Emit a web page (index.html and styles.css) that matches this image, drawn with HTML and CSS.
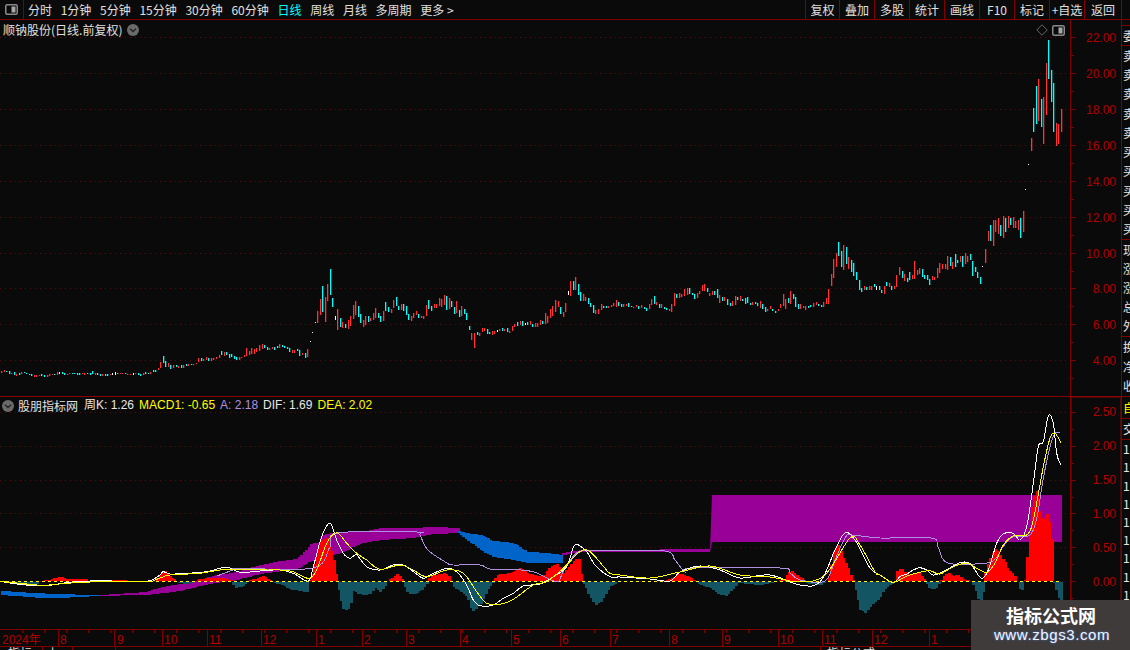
FILE: index.html
```html
<!DOCTYPE html>
<html lang="zh-CN">
<head>
<meta charset="utf-8">
<title>顺钠股份</title>
<link rel="stylesheet" href="styles.css">
</head>
<body>
<div class="app">
  <header class="toolbar">
    <button class="tb-toggle" type="button" aria-label="切换">
      <svg class="panel-icon" viewBox="0 0 13 11"><rect x="0.75" y="0.75" width="11.5" height="9.5" rx="1.5" class="panel-frame"/><rect x="6.5" y="2.5" width="4" height="6" class="panel-fill"/></svg>
    </button>
    <nav class="periods">
      <span>分时</span><span>1分钟</span><span>5分钟</span><span>15分钟</span><span>30分钟</span><span>60分钟</span>
      <span class="active">日线</span><span>周线</span><span>月线</span><span>多周期</span><span>更多 &gt;</span>
    </nav>
    <div class="actions">
      <span class="act act-first">复权</span><span class="act">叠加</span><span class="act">多股</span><span class="act">统计</span><span class="act">画线</span><span class="act">F10</span><span class="act">标记</span><span class="act">+自选</span><span class="act act-last">返回</span>
    </div>
  </header>

  <div class="body">
    <div class="chart-col">
      <section class="pane pane-main">
        <div class="pane-title">
          <span>顺钠股份(日线.前复权)</span>
          <svg class="round-icon" viewBox="0 0 12 12"><circle cx="6" cy="6" r="6" class="round-bg"/><path d="M3 4.8 6 7.6 9 4.8" class="round-chev"/></svg>
        </div>
        <div class="pane-tools">
          <svg class="diamond" viewBox="0 0 12 12"><path d="M6 .8 11.2 6 6 11.2 .8 6Z"/></svg>
          <svg class="panel-icon" viewBox="0 0 13 11"><rect x="0.75" y="0.75" width="11.5" height="9.5" rx="1.5" class="panel-frame"/><rect x="6.5" y="2.5" width="4" height="6" class="panel-fill"/></svg>
        </div>
        <svg id="mainChart" class="canvas" viewBox="0 20 1121 376">
          <g class="ax-labels">
            <text x="1116" y="42">22.00</text><text x="1116" y="78">20.00</text><text x="1116" y="114">18.00</text><text x="1116" y="150">16.00</text><text x="1116" y="186">14.00</text><text x="1116" y="222">12.00</text><text x="1116" y="258">10.00</text><text x="1116" y="293">8.00</text><text x="1116" y="329">6.00</text><text x="1116" y="365">4.00</text>
          </g>
        </svg>
      </section>

      <section class="pane pane-sub">
        <div class="pane-title pane-title-sub">
          <svg class="round-icon" viewBox="0 0 12 12"><circle cx="6" cy="6" r="6" class="round-bg"/><path d="M3 4.8 6 7.6 9 4.8" class="round-chev"/></svg>
          <span class="sub-name">股朋指标网</span>
          <span class="v-white">周K: 1.26</span>
          <span class="v-yellow">MACD1: -0.65</span>
          <span class="v-lav">A: 2.18</span>
          <span class="v-white">DIF: 1.69</span>
          <span class="v-yellow">DEA: 2.02</span>
        </div>
        <svg id="subChart" class="canvas" viewBox="0 397 1121 233">
          <g class="ax-labels">
            <text x="1116" y="416">2.50</text><text x="1116" y="450">2.00</text><text x="1116" y="484">1.50</text><text x="1116" y="518">1.00</text><text x="1116" y="552">0.50</text><text x="1116" y="586">0.00</text>
          </g>
        </svg>
      </section>

      <div class="date-row">
        <svg id="dateAxis" class="canvas" viewBox="0 630 1121 17">
          <g class="date-labels">
            <text x="2" y="644">2024年</text><text x="60" y="644">8</text><text x="117" y="644">9</text><text x="164" y="644">10</text><text x="209" y="644">11</text><text x="263" y="644">12</text><text x="318" y="644">1</text><text x="364" y="644">2</text><text x="408" y="644">3</text><text x="462" y="644">4</text><text x="513" y="644">5</text><text x="562" y="644">6</text><text x="612" y="644">7</text><text x="671" y="644">8</text><text x="724" y="644">9</text><text x="780" y="644">10</text><text x="824" y="644">11</text><text x="874" y="644">12</text><text x="931" y="644">1</text>
          </g>
        </svg>
      </div>

      <div class="bottom-row">
        <span class="bt bt-a">指标</span><span class="bt bt-b">上</span><span class="bt bt-c"></span><span class="bt bt-d"></span><span class="bt bt-e">指标公式</span>
      </div>
    </div>

    <aside class="side">
      <div class="side-gap"></div>
      <div class="side-group side-g0"><span>委</span></div>
      <div class="side-group side-g1"><span>卖</span><span>卖</span><span>卖</span><span>卖</span><span>卖</span><span>买</span><span>买</span><span>买</span><span>买</span><span>买</span></div>
      <div class="side-group side-g2"><span>现</span><span>涨</span><span>涨</span><span>总</span><span>外</span></div>
      <div class="side-group side-g3"><span>换</span><span>净</span><span>收</span></div>
      <div class="side-group side-g4"><span class="side-yellow">自</span></div>
      <div class="side-group side-g5"><span>交</span></div>
      <div class="side-group side-g6"><span>1.82</span><span>1.76</span><span>1.64</span><span>1.52</span><span>1.40</span><span>1.36</span><span>1.28</span><span>1.21</span><span>1.15</span></div>
    </aside>
  </div>

  <div class="watermark">
    <div class="wm-title">指标公式网</div>
    <div class="wm-url">www.zbgs3.com</div>
  </div>
</div>
<script src="chart.js"></script>
</body>
</html>
```
FILE: styles.css
```css
* { box-sizing: border-box; }
html, body { margin: 0; padding: 0; background: #0a0a0a; }
body { font: 12px "Liberation Sans", "Noto Sans CJK SC", sans-serif; color: #e0e0e0; }
.app { position: relative; width: 1130px; height: 650px; overflow: hidden; background: #0a0a0a; display: flex; flex-direction: column; }

.toolbar { height: 20px; flex: none; display: flex; align-items: stretch; border-bottom: 1px solid #800000; font-family: "Noto Sans CJK SC", sans-serif; }
.tb-toggle { width: 24px; padding: 0 0 0 5px; background: none; border: 0; border-right: 1px solid #800000; display: flex; align-items: center; }
.panel-icon { width: 13px; height: 11px; display: block; }
.panel-frame { fill: none; stroke: #8a8a8a; stroke-width: 1.5; }
.panel-fill { fill: #a8a8a8; }
.periods { display: flex; align-items: center; gap: 8.7px; padding-left: 4px; line-height: 19px; white-space: nowrap; }
.periods .active { color: #00ffff; }
.actions { margin-left: auto; display: flex; padding-right: 8px; }
.act { width: 35px; text-align: center; line-height: 19px; border-right: 1px solid #800000; }
.act-first { width: 35px; border-left: 1px solid #800000; }
.act-last { width: 37px; }

.body { flex: 1; min-height: 0; display: flex; }
.chart-col { width: 1121px; flex: none; display: flex; flex-direction: column; }
.pane { position: relative; flex: none; }
.pane-main { height: 377px; border-bottom: 1px solid #8a0000; }
.pane-sub { height: 233px; }
.canvas { display: block; width: 100%; height: 100%; }
.pane-title { position: absolute; left: 3px; top: 1px; display: flex; align-items: center; gap: 5px; line-height: 17px; font-family: "Noto Sans CJK SC", sans-serif; z-index: 1; }
.pane-title-sub { left: 2px; top: 0; gap: 5px; font-family: "Liberation Sans", "Noto Sans CJK SC", sans-serif; }
.sub-name { margin: 0 1px 0 -1px; font-family: "Noto Sans CJK SC", sans-serif; }
.round-icon { width: 12px; height: 12px; display: block; }
.round-bg { fill: #6a6a6a; }
.round-chev { fill: none; stroke: #222; stroke-width: 1.4; }
.pane-tools { position: absolute; left: 1036px; top: 4px; display: flex; align-items: center; gap: 4px; z-index: 1; }
.diamond { width: 12px; height: 12px; display: block; }
.diamond path { fill: none; stroke: #666; stroke-width: 1; }
.v-white { color: #e8e8e8; }
.v-yellow { color: #ffff00; }
.v-lav { color: #b090e0; }

.ax-labels text { font: 12px "Liberation Sans", sans-serif; fill: #b00000; text-anchor: end; }
.date-labels text { font: 12px "Liberation Sans", "Noto Sans CJK SC", sans-serif; fill: #b00000; }
.date-row { height: 17px; flex: none; }
.bottom-row { height: 3px; flex: none; display: flex; overflow: hidden; line-height: 12px; font-family: "Noto Sans CJK SC", sans-serif; }
.bt { border-right: 1px solid #800000; padding-left: 8px; white-space: nowrap; color: #ddd; }
.bt-a { width: 43px; }
.bt-b { width: 30px; padding-left: 4px; }
.bt-c { width: 43px; }
.bt-d { width: 705px; }
.bt-e { width: 100px; padding-left: 6px; border-right: 0; }

.side { flex: 1; min-width: 0; border-left: 1px solid #800000; display: flex; flex-direction: column; overflow: hidden; font-family: "Noto Sans CJK SC", sans-serif; line-height: 1; }
.side-gap { height: 5px; flex: none; }
.side-group { display: flex; flex-direction: column; flex: none; border-top: 1px solid #800000; white-space: nowrap; }
.side-group span { flex: 1; display: flex; align-items: center; padding-left: 1px; color: #e6e6e6; }
.side-g0 { height: 20px; }
.side-g1 { height: 194px; }
.side-g2 { height: 97px; }
.side-g3 { height: 60px; }
.side-g4 { height: 22px; }
.side-g5 { height: 21px; }
.side-g6 { height: 165px; }
.side .side-yellow { color: #ffff00; }

.watermark { position: absolute; left: 971px; top: 600px; width: 159px; height: 50px; background: #3f3b3b; text-align: center; z-index: 2; }
.wm-title { font: bold 18px/22px "Noto Sans CJK SC", sans-serif; color: #fff; margin-top: 4px; padding-left: 1px; }
.wm-url { font: 15px/18px "Liberation Sans", sans-serif; color: #eef4ff; letter-spacing: .6px; padding-left: 3px; text-shadow: 0 0 2px #4a80e0; }
```
FILE: chart.js
```js
var NS = "http://www.w3.org/2000/svg";
var RED = "#ff3333", CYAN = "#00ffff", DARK = "#800000", GRID = "#5a0a0a", PURPLE = "#980098";

function el(parent, name, attrs) {
  var n = document.createElementNS(NS, name);
  for (var k in attrs) n.setAttribute(k, attrs[k]);
  parent.appendChild(n);
  return n;
}
function layer(svg) {
  var g = document.createElementNS(NS, "g");
  svg.insertBefore(g, svg.firstChild);
  return g;
}
function conv(ox, oy, pts) {
  return pts.map(function (p) { return [ox + p[0] / 3, oy + p[1] / 3]; });
}
function interp(pts, x) {
  if (x < pts[0][0]) return pts[0].slice(1);
  for (var i = 1; i < pts.length; i++) {
    if (x <= pts[i][0]) {
      var a = pts[i - 1], b = pts[i], t = (x - a[0]) / ((b[0] - a[0]) || 1);
      return a.slice(1).map(function (v, j) { return v + (b[j + 1] - v) * t; });
    }
  }
  return pts[pts.length - 1].slice(1);
}
function smooth(pts) {
  var d = "M" + pts[0][0].toFixed(1) + " " + pts[0][1].toFixed(1);
  for (var i = 0; i < pts.length - 1; i++) {
    var p0 = pts[i - 1] || pts[i], p1 = pts[i], p2 = pts[i + 1], p3 = pts[i + 2] || p2;
    var c1x = p1[0] + (p2[0] - p0[0]) / 6, c1y = p1[1] + (p2[1] - p0[1]) / 6;
    var c2x = p2[0] - (p3[0] - p1[0]) / 6, c2y = p2[1] - (p3[1] - p1[1]) / 6;
    d += "C" + [c1x, c1y, c2x, c2y, p2[0], p2[1]].map(function (v) { return v.toFixed(1); }).join(" ");
  }
  return d;
}

var candleSets = [
 [0, 330, "4,123,129,r 13,121,126,r 19,123,125,c 28,123,132,c 34,129,132,r 43,126,135,c 49,132,138,r 58,129,135,c 64,126,132,r 73,126,129,c 79,129,132,c 88,132,135,c 94,132,138,c 103,135,141,r 109,135,141,r 118,135,138,r 124,132,138,c 133,135,141,c 142,135,141,r 148,132,138,r 157,132,135,r 163,132,135,c 172,126,135,r 178,126,132,w 187,126,132,c 193,129,135,c 202,132,135,r 208,129,132,r 217,129,132,c 223,129,132,c 232,129,135,c 238,129,135,c 247,129,132,r 253,129,135,r 262,129,132,c 271,129,135,c 277,123,132,c 286,129,135,r 292,129,135,c 301,132,138,c 307,132,138,r 316,132,138,c 322,132,138,c 331,132,135,r 337,129,135,w 346,126,135,w 352,129,132,c 361,129,132,r 367,129,132,r 376,129,132,c 382,132,135,r 391,132,135,r 400,129,135,w 406,129,132,r 415,129,135,c 421,132,138,c 430,129,135,r 436,126,132,c 445,129,132,c 451,126,132,r 460,120,126,c 466,120,126,c 475,114,120,r 481,96,114,r 490,78,99,c 496,93,111,c 505,99,111,r 511,105,117,c 520,105,114,r 529,105,111,c 535,108,114,r 544,105,114,c 550,105,114,r 559,102,108,c 565,102,108,r 574,102,105,c 580,102,105,r 589,99,102,r 595,84,96,r 604,84,93,c 610,87,93,r 619,81,90,r 625,84,93,c 634,84,93,r 640,84,90,r 649,81,87,r 658,75,84,r 664,63,75,c 673,66,78,r 679,66,75,c 688,72,84,c 694,72,81,c 703,78,87,c 709,81,90,c 718,81,90,r 724,81,84,r 733,75,81,r 739,54,78,r 748,63,75,r 754,54,72,r 763,57,72,r 769,54,66,r 778,45,63,r 787,42,57,r 793,45,54,c 802,51,60,c 808,54,60,r 817,51,57,r 823,51,60,c 832,48,54,c 838,42,54,r 847,45,51,c 853,48,54,c 862,51,57,c 868,54,66,c"],
 [290, 260, "7,270,280,r 13,270,280,r 22,266,272,c 28,270,288,c 37,280,285,r 45,279,294,c 52,267,290,r 61,243,245,w 67,216,218,w 75,186,189,w 82,153,190,r 91,117,165,r 97,78,156,c 106,110,186,r 112,72,122,r 121,27,105,c 127,114,141,c 136,168,180,w 142,147,210,r 151,174,202,c 157,186,204,r 166,192,204,c 175,180,207,r 181,168,198,r 190,135,177,r 196,123,165,r 205,138,171,c 211,162,189,c 220,180,201,r 226,168,195,r 235,168,186,c 241,174,183,r 250,159,180,r 256,144,174,r 265,159,174,c 271,168,186,c 280,153,183,r 286,126,153,c 295,141,156,c 304,147,159,r 310,120,144,r 319,111,138,c 325,138,150,c 334,132,150,r 340,132,153,c 349,138,165,c 355,162,180,c 364,168,183,r 370,159,174,r 379,153,165,r 385,162,174,c 394,168,174,r 400,168,177,r 409,135,168,r 415,120,147,c 424,138,153,c 433,132,144,r 439,132,144,r 448,114,138,r 454,117,141,r 463,105,135,r 469,108,150,c 478,114,147,r 484,123,141,c 493,141,162,c 499,123,159,r 508,150,171,c 514,138,168,r 523,147,162,c 529,159,180,c 538,198,210,c 544,219,240,r 553,219,264,r 562,216,225,c 568,219,228,r 577,204,216,r 583,204,214,r 592,207,222,c 598,216,222,c 607,213,225,r 613,213,222,r 622,210,216,w 628,207,213,r 637,204,213,c 643,207,213,r 652,204,216,c 658,213,219,r 667,198,213,r 673,192,201,r 682,186,198,c 691,183,195,r 697,183,198,c 706,189,195,w 712,186,195,c 721,183,195,r 727,192,201,c 736,189,201,r 742,189,201,r 751,180,195,r 757,183,192,c 766,159,192,r 772,168,189,r 781,147,174,r 787,138,168,r 796,120,156,r 805,123,141,r 811,141,162,c 820,156,171,r 826,129,156,r 835,93,105,w 841,63,108,r 850,63,90,c 856,51,90,r 865,72,105,c"],
 [580, 270, "1,66,93,c 10,72,93,r 16,81,93,r 25,84,102,c 31,99,111,c 40,105,129,c 46,120,132,r 55,117,132,r 64,102,120,r 70,108,114,c 79,108,114,c 85,108,114,r 94,105,111,r 100,99,108,r 109,90,111,r 115,96,108,c 124,102,111,c 130,102,111,r 139,102,108,r 145,99,111,c 154,108,111,c 160,111,114,r 169,105,111,r 175,108,117,c 184,105,114,r 193,111,117,c 199,114,123,c 208,102,117,r 214,87,105,r 223,78,102,c 229,96,105,r 238,102,114,c 244,102,114,r 253,111,117,c 259,114,120,c 268,117,123,r 274,102,126,r 283,69,108,r 289,72,84,c 298,69,84,r 304,72,81,r 313,57,78,r 322,54,75,r 328,54,72,c 337,69,75,c 343,72,87,c 352,69,84,r 358,63,72,r 367,45,63,r 373,42,63,r 382,54,66,c 388,69,78,r 397,63,75,r 403,63,75,c 412,57,84,c 418,75,99,r 427,81,93,c 433,81,93,r 442,87,105,c 451,99,108,c 457,93,108,r 466,78,105,r 472,81,90,c 481,78,93,r 487,87,93,c 496,84,102,c 502,81,99,c 511,99,105,c 517,96,105,r 526,96,102,c 532,99,108,c 541,93,114,r 547,102,117,c 556,111,126,c 562,117,123,r 571,108,117,r 577,117,123,c 586,123,129,c 595,117,123,r 601,102,114,r 610,72,108,r 616,87,117,r 625,84,99,c 631,63,102,r 640,72,87,c 646,81,111,c 655,102,117,c 661,102,117,r 670,108,114,r 676,108,120,r 685,108,114,c 691,105,111,c 700,99,111,r 709,96,105,r 715,102,108,c 724,105,111,c 730,96,111,r 739,84,102,r 745,57,102,r"],
 [820, 230, "34,132,168,r 40,87,144,r 49,69,111,r 55,36,78,c 64,63,111,c 70,45,120,r 79,51,102,c 85,81,117,r 94,90,126,c 100,99,138,c 109,126,150,c 118,150,180,c 124,174,186,c 133,168,180,r 139,171,180,c 148,168,180,r 154,168,180,r 163,162,171,c 169,168,180,w 178,168,180,c 184,180,189,c 193,168,192,r 199,156,168,c 208,159,171,r 214,168,180,c 223,168,177,r 229,135,171,r 238,111,135,r 247,123,144,c 253,132,153,r 262,144,156,c 268,126,150,c 277,135,147,r 283,93,147,r 292,120,135,r 298,114,132,r 307,117,141,c 313,135,147,c 322,135,150,c 328,147,165,c 337,138,150,r 343,141,150,r 352,114,144,r 358,99,129,r 367,102,117,r 376,102,117,r 382,78,120,r 391,81,108,c 397,96,117,r 406,72,111,c 412,90,99,c 421,78,96,r 427,78,111,c 436,69,102,r 442,78,96,r 451,72,90,c 457,93,138,c 466,111,126,c 472,126,144,c 481,141,162,c 487,108,110,w 496,57,99,r"],
 [960, 20, "85,633,663,r 91,615,663,c 100,600,678,r 106,600,636,r 115,594,642,r 121,615,648,c 130,588,654,r 136,594,636,c 145,588,624,r 151,594,615,c 160,591,624,r 166,603,624,r 175,600,630,r 181,594,654,c 190,573,636,r 196,507,510,w 205,432,435,w 214,354,393,r 220,264,336,c 229,198,312,c 235,177,303,r 244,237,321,c 250,231,372,r 259,129,285,r 265,60,177,c 274,150,246,c 280,189,336,c 289,309,378,r 295,312,372,r 304,267,336,r"]
];

/* ---------- axes ---------- */
function drawAxis(g, top, bottom, majors, minorGap, gridRight) {
  el(g, "line", { x1: 1070.5, x2: 1070.5, y1: top, y2: bottom, stroke: DARK });
  majors.forEach(function (y) {
    el(g, "line", { x1: 0, x2: gridRight, y1: y + .5, y2: y + .5, stroke: GRID, "stroke-dasharray": "1 4" });
    el(g, "line", { x1: 1071, x2: 1076, y1: y + .5, y2: y + .5, stroke: DARK });
    el(g, "line", { x1: 1071, x2: 1074, y1: y + minorGap + .5, y2: y + minorGap + .5, stroke: DARK });
  });
}

var mainSvg = document.getElementById("mainChart");
var mainG = layer(mainSvg);
drawAxis(mainG, 20, 396, [37, 73, 109, 145, 181, 217, 253, 288, 324, 360], 18, 1066);
candleSets.forEach(function (set) {
  set[2].split(" ").forEach(function (c) {
    var p = c.split(","), x = Math.round(set[0] + p[0] / 3), y1 = set[1] + p[1] / 3, y2 = set[1] + p[2] / 3;
    el(mainG, "rect", {
      x: x, y: Math.round(y1), width: p[3] === "w" ? 1 : 1.3,
      height: Math.max(1, Math.round(y2 - y1)),
      fill: p[3] === "r" ? RED : p[3] === "c" ? CYAN : "#ffffff"
    });
  });
});

/* ---------- indicator pane ---------- */
var subSvg = document.getElementById("subChart");
var subG = layer(subSvg);
el(subG, "rect", { x: 1071, y: 397, width: 50, height: 233, fill: "none", stroke: "#8a0a0a" });
drawAxis(subG, 397, 630, [412, 446, 480, 513, 547, 581], 17, 1066);
el(subG, "line", { x1: 0, x2: 1121, y1: 629.5, y2: 629.5, stroke: DARK });

var STEP = 2.45;
function band(pts, color) {
  var start = pts[0][0], end = pts[pts.length - 1][0];
  for (var x = start; x < end; x += STEP) {
    var v = interp(pts, x), t = Math.round(v[0]), b = Math.round(v[1]);
    el(subG, "rect", { x: Math.floor(x), y: t, width: 3, height: Math.max(1, b - t), fill: color });
  }
}
band([[1,591,595],[13,591.7,596],[27,592.7,596.7],[38,593.3,598],[63,594.3,597.7],[100,595,596]], "#0064c8");
band([[100,595,596],[127,593.3,595.3],[147,591.7,595],[160,587.3,593.3],[180,584,590.7],[200,580,586],[213,575.7,583.3],[233,572.7,580.7],[260,565,574],[277,561.7,571.7],[297,559,569],[312,543,560],[318,543,563],[322,535,557],[340,531.7,553],[362,531.7,543],[380,528,540],[413,528,538],[433,527,534],[458,528,533]], PURPLE);
band([[458,531,533],[467,533,540],[480,535,550],[493,541,557],[513,543,560],[527,552,563],[547,553,563],[562,555,563]], "#0064c8");
band([[562,553,555],[580,550,552],[610,550,552],[708,549,552]], PURPLE);
el(subG, "path", { d: "M708 549H710L712 495H1062V542H712L710 552H708Z", fill: PURPLE });

var hist = [[0,0],[8,-1],[12,-2],[25,-3],[35,-3],[40,0],[48,1],[55,3],[60,4],[66,2],[86,2],[88,0],[100,0],[105,1],[125,1],[127,0],[155,0],[157,3],[163,11],[170,4],[175,1],[177,0],[178,-1],[185,-2],[190,-1],[196,0],[198,2],[210,3],[220,3],[230,2],[231,-1],[235,-6],[240,-5],[247,-1],[248,1],[255,2],[262,5],[268,2],[271,0],[273,-1],[280,-2],[283,-3],[290,-8],[295,-8],[300,-9],[303,-10],[307,-10],[308,0],
[310,2],[313,15],[317,30],[320,40],[325,43],[329,43],[330,32],[333,22],[336,5],[337,0],[338,-8],[340,-17],[343,-27],[347,-28],[350,-23],[353,-8],[358,-12],[363,-13],[370,-12],[375,-6],[380,-10],[386,-2],[387,0],[390,2],[397,7],[402,2],[403,0],[405,-8],[408,-12],[413,-12],[420,-9],[426,-3],[427,0],[430,5],[437,6],[443,8],[447,7],[451,0],[453,-5],[460,-9],[467,-15],[470,-25],[473,-29],[480,-22],[487,-8],[493,0],[497,6],[513,9],[520,13],[527,8],[537,5],[543,5],[550,15],[557,17],[563,7],[573,20],[578,23],[581,5],[582,0],[584,-3],[588,-12],[595,-23],[600,-20],[610,-4],[615,-2],[618,0],
[665,0],[672,3],[680,8],[692,2],[696,0],[700,-3],[710,-6],[718,-12],[726,-14],[735,-4],[738,0],[745,-2],[760,-3],[770,-1],[775,0],[784,2],[790,11],[798,5],[805,0],[808,-2],[820,-3],[825,0],[828,2],[833,30],[838,36],[842,25],[848,12],[851,3],[853,0],[855,-8],[860,-28],[865,-31],[872,-22],[880,-15],[883,-8],[890,-3],[895,0],[897,12],[902,12],[905,8],[908,6],[913,7],[918,9],[922,4],[925,0],[927,-4],[930,-7],[935,-7],[938,-3],[940,0],[942,3],[947,9],[952,5],[957,7],[962,2],[968,1],[970,0],[973,-3],[978,-18],[982,-19],[983,0],[988,20],[995,33],[1000,25],[1005,18],[1008,11],[1012,8],[1015,4],[1017,0],[1018,-5],[1021,-10],[1023,-3],[1024,0],[1025,13],[1028,35],[1032,80],[1037,92],[1039,68],[1043,60],[1046,68],[1049,58],[1052,35],[1053,0],[1055,-5],[1058,-15],[1062,-22]];
for (var hx = 0; hx < 1062; hx += STEP) {
  var h = Math.round(interp(hist, hx)[0]);
  if (h === 0) continue;
  el(subG, "rect", {
    x: Math.floor(hx), width: 3,
    y: h > 0 ? 581 - h : 582, height: Math.abs(h),
    fill: h > 0 ? "#ff0000" : "#135563"
  });
}
el(subG, "line", { x1: 0, x2: 1062, y1: 581.5, y2: 581.5, stroke: "#ffff00", "stroke-dasharray": "3 3" });

var lavender = [[217,576],[233,570],[240,568.3],[313,568],[330,546.7],[338,533],[417,532],[420,535],[428,550],[447,563],[453,565],[480,565],[490,569],[513,569.3],[533,571.7],[547,578],[558,581.7],[563,571.7],[573,556.7],[583,550.7],[610,551],[665,551],[675,560],[685,572],[692,568],[780,568],[790,573],[800,580],[825,581],[835,560],[845,538],[852,535],[880,538],[931,538],[938,546.7],[948,563],[987,563],[997,556.7],[1003,546.7],[1013,536.7],[1030,535],[1037,516.7],[1043,480],[1050,446.7],[1055,433],[1060,433]];

var white = conv(0, 560, [[0,64],[50,72],[130,78],[200,68],[300,62],[400,66],[450,62],[480,45],[490,35],[510,42],[560,40],[620,35],[680,22],[720,37],[790,32]])
  .concat(conv(280, 510, [[0,180],[40,190],[85,213],[100,170],[125,80],[150,40],[170,90],[190,130],[210,145],[230,135],[260,170],[300,180],[340,165],[370,165],[400,185],[430,205],[450,195],[500,175],[530,185],[560,225],[580,270],[600,287],[640,285],[670,265],[700,250],[730,228],[780,222],[820,200],[860,170],[885,105],[920,125],[945,165],[990,200]]))
  .concat([[620,577],[650,579],[670,581],[680,572],[700,566],[720,570],[740,578],[770,575],[800,585],[820,582],[835,550],[845,533],[855,540],[870,568]])
  .concat(conv(880, 400, [[0,525],[40,548],[60,530],[80,522],[100,510],[120,503],[140,510],[160,525],[190,515],[240,488],[270,490],[285,510],[305,535],[325,510],[350,430],[370,402],[400,400],[420,420],[440,380],[460,250],[475,140],[490,125],[505,48],[520,70],[530,160],[543,195]]));

var yellow = conv(0, 560, [[0,64],[60,70],[130,76],[200,70],[300,65],[440,65],[470,58],[510,45],[600,40],[680,28],[800,30]])
  .concat(conv(280, 510, [[0,180],[40,185],[85,205],[110,180],[140,100],[170,68],[200,100],[230,130],[260,150],[300,178],[360,165],[400,180],[440,200],[500,180],[550,190],[590,245],[620,280],[660,283],[700,268],[760,225],[800,215],[850,175],[900,125],[930,125],[975,175],[990,190]]))
  .concat([[620,575],[650,578],[680,572],[710,566],[740,575],[770,577],[800,582],[825,575],[850,538],[860,545],[875,572]])
  .concat(conv(880, 400, [[0,525],[40,547],[80,528],[120,517],[150,512],[180,522],[220,500],[260,490],[290,505],[320,517],[345,490],[370,435],[400,408],[440,405],[460,360],[490,200],[510,115],[525,100],[543,128]]));

[[lavender, "#b090e0"], [white, "#ffffff"], [yellow, "#ffff00"]].forEach(function (s) {
  el(subG, "path", { d: smooth(s[0]), fill: "none", stroke: s[1], "stroke-width": 1, "shape-rendering": "crispEdges" });
});

/* ---------- date axis ---------- */
var dateG = layer(document.getElementById("dateAxis"));
el(dateG, "line", { x1: 0, x2: 1121, y1: 646.5, y2: 646.5, stroke: DARK });
[58, 114, 162, 207, 261, 316, 362, 406, 460, 511, 560, 610, 669, 722, 778, 822, 872, 929].forEach(function (x) {
  el(dateG, "line", { x1: x + .5, x2: x + .5, y1: 630, y2: 646, stroke: DARK });
});
for (var tx = 22; tx < 1066; tx += 22) {
  el(dateG, "line", { x1: tx + .5, x2: tx + .5, y1: 630, y2: 633, stroke: DARK });
}
```
